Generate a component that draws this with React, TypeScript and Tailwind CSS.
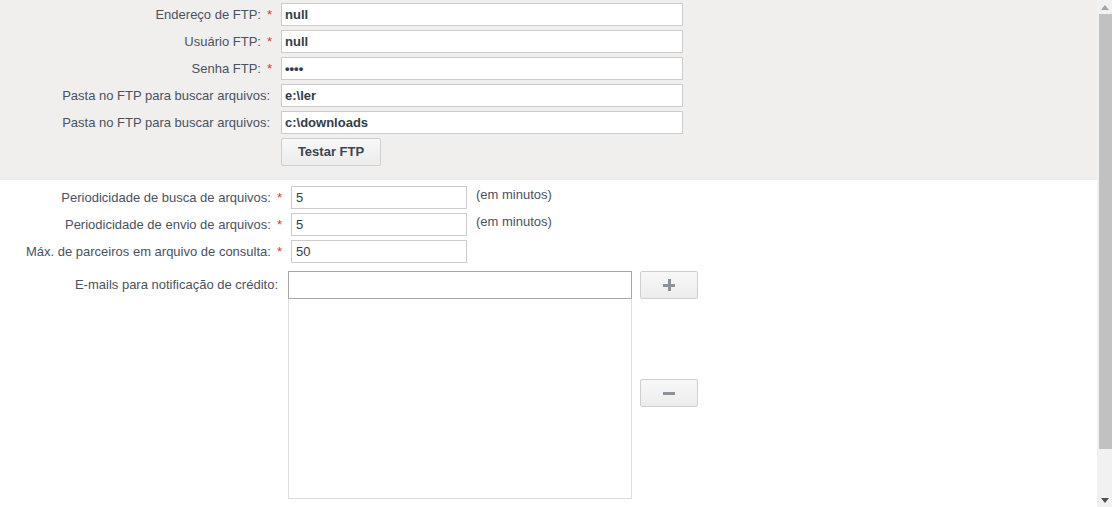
import React from "react";

const font = { fontFamily: '"Liberation Sans", Arial, sans-serif' };

function Label({ text, required }: { text: string; required?: boolean }) {
    return (
        <div className="flex items-center justify-end text-[13px] text-[#4a5260] whitespace-nowrap">
            <span>{text}</span>
            {required ? <span className="ml-[6px] text-[#e8302f]">*</span> : <span className="w-[2px]" />}
        </div>
    );
}

const ftpRows = [
    { label: "Endereço de FTP:", value: "null", required: true },
    { label: "Usuário FTP:", value: "null", required: true },
    { label: "Senha FTP:", value: "••••", required: true },
    { label: "Pasta no FTP para buscar arquivos:", value: "e:\\ler" },
    { label: "Pasta no FTP para buscar arquivos:", value: "c:\\downloads" },
];

const periodRows = [
    { label: "Periodicidade de busca de arquivos:", value: "5", hint: "(em minutos)" },
    { label: "Periodicidade de envio de arquivos:", value: "5", hint: "(em minutos)" },
    { label: "Máx. de parceiros em arquivo de consulta:", value: "50" },
];

function GrayButton({ children, className }: { children: React.ReactNode; className: string }) {
    return (
        <button className={`flex items-center justify-center border border-[#cfcfcf] rounded-[2px] bg-gradient-to-b from-[#f8f8f8] to-[#ececec] ${className}`}>
            {children}
        </button>
    );
}

export default function App() {
    return (
        <div className="flex h-[507px] w-[1112px] overflow-hidden bg-white" style={font}>
            <div className="flex-1 flex flex-col">
                {/* FTP block */}
                <div className="bg-[#f0efee] pt-[3px] pb-[14px]">
                    <div className="grid grid-cols-[272px_402px] gap-x-[9px] gap-y-[4px]">
                        {ftpRows.map((row, i) => (
                            <React.Fragment key={i}>
                                <Label text={row.label} required={row.required} />
                                <div className="h-[23px] border border-[#cccccc] bg-white px-[3px] flex items-center text-[13px] font-bold text-[#333d47]">
                                    {row.value}
                                </div>
                            </React.Fragment>
                        ))}
                        <div />
                        <GrayButton className="w-[100px] h-[28px] text-[13px] font-bold text-[#3c4650]">Testar FTP</GrayButton>
                    </div>
                </div>

                {/* periods */}
                <div className="pt-[6px] grid grid-cols-[282px_176px_auto] gap-x-[9px] gap-y-[4px] items-start">
                    {periodRows.map((row, i) => (
                        <React.Fragment key={i}>
                            <div className="h-[23px] flex justify-end">
                                <Label text={row.label} required />
                            </div>
                            <div className="h-[23px] border border-[#cccccc] bg-white px-[4px] flex items-center text-[13px] text-[#333d47]">
                                {row.value}
                            </div>
                            <div className="-mt-[1px] text-[13px] text-[#4a5260]">{row.hint}</div>
                        </React.Fragment>
                    ))}
                </div>

                {/* e-mails */}
                <div className="pt-[8px] flex">
                    <div className="w-[278px] h-[28px] flex items-center justify-end text-[13px] text-[#4a5260]">
                        E-mails para notificação de crédito:
                    </div>
                    <div className="ml-[10px] w-[344px] flex flex-col">
                        <div className="h-[28px] border border-[#a5a5a5] bg-white" />
                        <div className="h-[200px] border border-t-0 border-[#dddddd] bg-white" />
                    </div>
                    <div className="ml-[8px] flex flex-col">
                        <GrayButton className="w-[58px] h-[28px]">
                            <span className="relative w-[12px] h-[12px]">
                                <span className="absolute left-[5px] top-0 w-[2.5px] h-[12px] bg-[#8a929c]" />
                                <span className="absolute top-[5px] left-0 w-[12px] h-[2.5px] bg-[#8a929c]" />
                            </span>
                        </GrayButton>
                        <GrayButton className="mt-[80px] w-[58px] h-[28px]">
                            <span className="w-[12px] h-[3px] bg-[#8a929c]" />
                        </GrayButton>
                    </div>
                </div>
            </div>

            {/* scrollbar */}
            <div className="w-[15px] h-full bg-[#f1f1f1] flex flex-col items-end">
                <div className="h-[14px] w-full flex items-center justify-center">
                    <svg width="8" height="5" viewBox="0 0 8 5"><path d="M4 0L8 5H0z" fill="#a3a3a3" /></svg>
                </div>
                <div className="w-[13px] h-[435px] bg-[#c1c1c1]" />
                <div className="flex-1" />
                <div className="h-[14px] w-full flex items-center justify-center">
                    <svg width="8" height="5" viewBox="0 0 8 5"><path d="M0 0H8L4 5z" fill="#505050" /></svg>
                </div>
            </div>
        </div>
    );
}
